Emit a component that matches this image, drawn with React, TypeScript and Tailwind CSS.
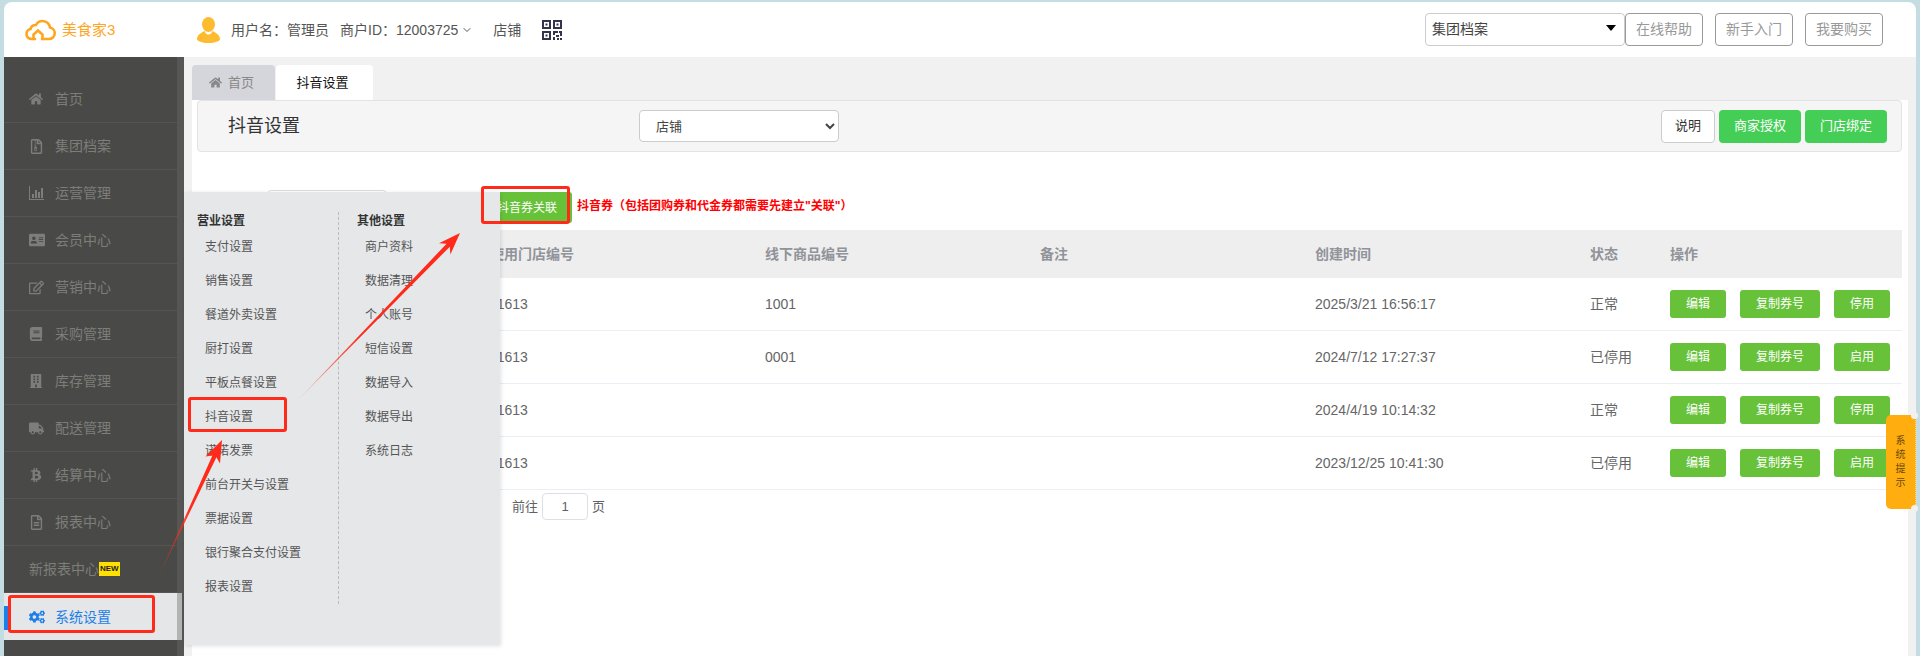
import React from 'react';
import {
  FaHome, FaRegFileArchive, FaAddressCard, FaRegEdit, FaBook, FaBuilding,
  FaTruck, FaBtc, FaRegFileAlt, FaCogs,
} from 'react-icons/fa';
import { ChevronDown } from 'lucide-react';

const BarIcon = () => (
  <svg width="15" height="14" viewBox="0 0 15 14" fill="currentColor">
    <path d="M0 0h1v13h14v1H0z" />
    <path d="M3 8h2v4H3zM6 4h2v8H6zM9 6h2v6H9zM12 2h2v10h-2z" />
  </svg>
);

// 侧边栏
const navItems = [
  { name: '首页', icon: <FaHome size={14} /> },
  { name: '集团档案', icon: <FaRegFileArchive size={15} /> },
  { name: '运营管理', icon: <BarIcon /> },
  { name: '会员中心', icon: <FaAddressCard size={16} /> },
  { name: '营销中心', icon: <FaRegEdit size={15} /> },
  { name: '采购管理', icon: <FaBook size={14} /> },
  { name: '库存管理', icon: <FaBuilding size={14} /> },
  { name: '配送管理', icon: <FaTruck size={15} /> },
  { name: '结算中心', icon: <FaBtc size={14} /> },
  { name: '报表中心', icon: <FaRegFileAlt size={15} /> },
];

const menuLeft = ['支付设置', '销售设置', '餐道外卖设置', '厨打设置', '平板点餐设置', '抖音设置', '诺诺发票', '前台开关与设置', '票据设置', '银行聚合支付设置', '报表设置'];
const menuRight = ['商户资料', '数据清理', '个人账号', '短信设置', '数据导入', '数据导出', '系统日志'];

const rows = [
  { code: '11613', goods: '1001', time: '2025/3/21 16:56:17', status: '正常', toggle: '停用' },
  { code: '11613', goods: '0001', time: '2024/7/12 17:27:37', status: '已停用', toggle: '启用' },
  { code: '11613', goods: '', time: '2024/4/19 10:14:32', status: '正常', toggle: '停用' },
  { code: '11613', goods: '', time: '2023/12/25 10:41:30', status: '已停用', toggle: '启用' },
];

const gridCols = 'grid grid-cols-[283px_275px_275px_275px_275px_80px_1fr] items-center';

function ActionButton({ label, wide }: { label: string; wide?: boolean }) {
  return (
    <button className={`h-7 ${wide ? 'w-20' : 'w-14'} rounded-[3px] bg-[#67c23a] text-xs leading-7 text-white`}>
      {label}
    </button>
  );
}

function HeaderButton({ label }: { label: string }) {
  return (
    <button className="h-[33px] w-[78px] rounded border border-[#999] text-sm leading-[31px] text-[#999]">
      {label}
    </button>
  );
}

function Logo() {
  return (
    <svg width="31" height="22" viewBox="0 0 31 22" fill="none" stroke="#ffa51f" strokeWidth="2.6" strokeLinecap="round">
      <path d="M10 20H6.5a5 5 0 0 1-1-9.9A5.5 5.5 0 0 1 11 6a7.5 7.5 0 0 1 14 2.5 5.8 5.8 0 0 1-1 11.5h-7" />
      <path d="M8.5 20v-4.5l4.5-4 4.5 4V20" />
    </svg>
  );
}

function Avatar() {
  return (
    <svg width="23" height="26" viewBox="0 0 23 26" fill="#fdbb2f">
      <ellipse cx="11.5" cy="7.5" rx="6.5" ry="7.5" />
      <path d="M7.5 14c1 3 3 3.5 4 3.5s3-.5 4-3.5c3 1.5 7.5 4 7.5 8 0 2-5 4-11.500 4S0 24 0 22c0-4 4.500-6.500 7.500-8z" />
    </svg>
  );
}

function QrIcon() {
  return (
    <svg width="20" height="20" viewBox="0 0 20 20" fill="#33334a">
      <path d="M0 0h9v9H0zm2 2v5h5V2zM11 0h9v9h-9zm2 2v5h5V2zM0 11h9v9H0zm2 2v5h5v-5z" fillRule="evenodd" />
      <path d="M3.500 3.500h2v2h-2zM14.500 3.500h2v2h-2zM3.500 14.500h2v2h-2zM11 11h5v2h-3v2h-2zM17 11h3v5h-2v-3h-1zM14 15h3v2h-3zM11 17h2v3h-2zM15 18h2v2h-2zM18 18h2v2h-2z" />
    </svg>
  );
}

function RedBox({ className }: { className: string }) {
  return <div className={`absolute rounded-[3px] border-[3px] border-[#ff2a1a] ${className}`} />;
}

export default function App() {
  return (
    <div className="relative flex h-[656px] w-full flex-col overflow-hidden bg-[#c3dde2] pl-1 pr-1 pt-0.5 font-['Liberation_Sans','Noto_Sans_CJK_SC',sans-serif]">

      {/* 顶部 */}
      <header className="flex h-[55px] shrink-0 items-center rounded-t-lg bg-white">
        <div className="ml-[21px] flex w-[172px] items-center gap-[6px]">
          <Logo />
          <span className="text-[15px] leading-5 text-[#ffa51f]">美食家3</span>
        </div>
        <Avatar />
        <span className="ml-[11px] text-sm text-[#555]">用户名：管理员</span>
        <span className="ml-[11px] text-sm text-[#555]">商户ID：12003725</span>
        <ChevronDown size={12} className="ml-[3px] text-[#555]" />
        <span className="ml-[20px] text-sm text-[#555]">店铺</span>
        <span className="ml-[21px]"><QrIcon /></span>

        <div className="ml-auto mr-[33px] flex items-center">
          <div className="relative h-[33px] w-[200px] rounded border border-[#ccc] pl-[6px] text-sm leading-[31px] text-[#444]">
            集团档案
            <span className="absolute right-[8px] top-[11px] h-0 w-0 border-x-[5px] border-t-[6px] border-x-transparent border-t-black" />
          </div>
          <div className="flex gap-3">
            <HeaderButton label="在线帮助" />
            <HeaderButton label="新手入门" />
            <HeaderButton label="我要购买" />
          </div>
        </div>
      </header>

      <div className="flex min-h-0 flex-1">

        {/* 侧边栏 */}
        <aside className="flex w-[180px] shrink-0 bg-[#494a47]">
          <nav className="w-[173px] pt-[19px]">
            {navItems.map((item) => (
              <div key={item.name} className="flex h-[47px] items-center border-b border-[#555653] pl-[25px] text-sm text-[#7d7d7a]">
                <span className="flex w-[26px] shrink-0 items-center">{item.icon}</span>
                {item.name}
              </div>
            ))}
            <div className="flex h-[47px] items-center border-b border-[#555653] pl-[25px] text-sm text-[#7d7d7a]">
              新报表中心
              <span className="bg-[#ffe000] px-[1px] text-[8px] font-bold leading-[14px] text-[#222]">NEW</span>
            </div>
            <div className="relative flex h-[47px] items-center bg-[#e4e6e8] pl-[25px] text-sm text-[#1e7fe8]">
              <span className="absolute left-0 top-[13px] h-[24px] w-1 bg-[#1e7fe8]" />
              <span className="flex w-[26px] shrink-0 items-center"><FaCogs size={16} /></span>
              系统设置
            </div>
          </nav>
          <div className="w-[7px] bg-[#565654] pt-[536px]">
            <div className="h-[47px] w-[5px] bg-[#b3b3b3]" />
          </div>
        </aside>

        {/* 内容区 */}
        <main className="flex min-w-0 flex-1 flex-col bg-[#f1f1f1] pl-2 pr-2">
          <div className="flex h-[43px] shrink-0 items-end gap-px">
            <div className="flex h-[35px] w-[83px] items-center justify-center gap-[6px] rounded-t bg-[#d5d6dc] pr-[4px] text-[13px] text-[#888]">
              <FaHome size={13} />
              首页
            </div>
            <div className="flex h-[35px] w-[97px] items-center justify-center rounded-t bg-white pr-[4px] text-[13px] text-[#111]">
              抖音设置
            </div>
          </div>

          <div className="min-h-0 flex-1 bg-white pl-[5px] pr-[6px]">

            {/* 标题栏 */}
            <div className="flex h-[52px] items-center rounded border border-[#e3e3e3] bg-[#f5f5f5] pl-[30px] pr-[14px]">
              <h1 className="w-[411px] text-lg text-[#333]">抖音设置</h1>
              <select className="h-8 w-[200px] rounded border border-[#ccc] bg-white pl-3 text-[13px] text-[#444]">
                <option>店铺</option>
              </select>
              <div className="ml-auto flex gap-1">
                <button className="h-[33px] w-[54px] rounded border border-[#ccc] bg-white text-[13px] text-[#333]">说明</button>
                <button className="h-[33px] w-[82px] rounded bg-[#44ce55] text-[13px] text-white">商家授权</button>
                <button className="h-[33px] w-[82px] rounded bg-[#44ce55] text-[13px] text-white">门店绑定</button>
              </div>
            </div>

            {/* 工具行 */}
            <div className="flex h-[78px] items-start pt-[38px]">
              <div className="ml-[70px] h-8 w-[120px] rounded border border-[#ddd]" />
              <button className="ml-[95px] mt-[2px] h-[31px] w-[90px] rounded-[3px] bg-[#67c23a] text-xs text-white">抖音券关联</button>
              <span className="ml-[5px] mt-[8px] text-xs font-bold leading-4 text-[#f00]">抖音券（包括团购券和代金券都需要先建立"关联"）</span>
            </div>

            {/* 表格 */}
            <div className={`${gridCols} h-[48px] bg-[#eee] text-sm font-bold text-[#909399]`}>
              <span />
              <span className="pl-[10px]">使用门店编号</span>
              <span className="pl-[10px]">线下商品编号</span>
              <span className="pl-[10px]">备注</span>
              <span className="pl-[10px]">创建时间</span>
              <span className="pl-[10px]">状态</span>
              <span className="pl-[10px]">操作</span>
            </div>
            {rows.map((row) => (
              <div key={row.time} className={`${gridCols} h-[53px] border-b border-[#ebeef5] text-sm text-[#666]`}>
                <span />
                <span className="pl-[10px]">{row.code}</span>
                <span className="pl-[10px]">{row.goods}</span>
                <span />
                <span className="pl-[10px]">{row.time}</span>
                <span className="pl-[10px]">{row.status}</span>
                <div className="flex gap-[14px] pl-[10px]">
                  <ActionButton label="编辑" />
                  <ActionButton label="复制券号" wide />
                  <ActionButton label={row.toggle} />
                </div>
              </div>
            ))}

            {/* 分页 */}
            <div className="flex items-center gap-[4px] pl-[315px] pt-[3px] text-[13px] text-[#606266]">
              前往
              <span className="h-[27px] w-[46px] rounded border border-[#dcdfe6] text-center leading-[25px]">1</span>
              页
            </div>
          </div>
        </main>
      </div>

      {/* 系统设置 弹出菜单 */}
      <div className="absolute left-[184px] top-[192px] flex h-[453px] w-[316px] bg-[#e5e7e9] pt-[18px] shadow-[1px_1px_4px_rgba(0,0,0,0.12)]">
        <div className="w-[154px] pl-[13px]">
          <div className="h-5 pt-px text-xs font-bold leading-5 text-[#333]">营业设置</div>
          {menuLeft.map((m) => (
            <div key={m} className="ml-2 h-[34px] text-xs leading-[34px] text-[#555]">{m}</div>
          ))}
        </div>
        <div className="mt-[2px] h-[392px] w-0 border-l border-dashed border-[#bbb]" />
        <div className="pl-[18px]">
          <div className="h-5 pt-px text-xs font-bold leading-5 text-[#333]">其他设置</div>
          {menuRight.map((m) => (
            <div key={m} className="ml-2 h-[34px] text-xs leading-[34px] text-[#555]">{m}</div>
          ))}
        </div>
      </div>

      {/* 系统提示 */}
      <div className="absolute left-[1886px] top-[415px] flex h-[94px] w-[30px] flex-col items-center justify-center rounded-l-[5px] border-r border-dotted border-[#ffd98a] bg-[#ffad0f] text-[10px] leading-[14px] text-[#6b4a0a]">
        <span>系</span>
        <span>统</span>
        <span>提</span>
        <span>示</span>
        <span className="absolute -right-[3px] -top-[3px] h-[7px] w-[7px] rounded-full bg-[#f1f1f1]" />
        <span className="absolute -bottom-[3px] -right-[3px] h-[7px] w-[7px] rounded-full bg-[#f1f1f1]" />
      </div>

      {/* 红框和箭头标注 */}
      <RedBox className="left-[8px] top-[595px] h-[38px] w-[147px]" />
      <RedBox className="left-[188px] top-[397px] h-[35px] w-[99px]" />
      <RedBox className="left-[481px] top-[186px] h-[38px] w-[89px]" />
      <svg className="pointer-events-none absolute left-0 top-0" width="600" height="656" viewBox="0 0 600 656">
        <defs>
          <linearGradient id="arrowA" gradientUnits="userSpaceOnUse" x1="158" y1="578" x2="190" y2="508">
            <stop offset="0" stopColor="#ff2a1a" stopOpacity="0.15" />
            <stop offset="1" stopColor="#ff2a1a" />
          </linearGradient>
          <linearGradient id="arrowB" gradientUnits="userSpaceOnUse" x1="296" y1="402" x2="360" y2="336">
            <stop offset="0" stopColor="#ff2a1a" stopOpacity="0.15" />
            <stop offset="1" stopColor="#ff2a1a" />
          </linearGradient>
        </defs>
        <polygon fill="url(#arrowA)" points="158,578 216.400,457.200 220,463.400 222,440 205.500,456.600 212.400,455.400" />
        <polygon fill="url(#arrowB)" points="296,402 449.800,246.700 450.400,254.400 460,233 439,243.200 446.600,243.700" />
      </svg>
    </div>
  );
}
